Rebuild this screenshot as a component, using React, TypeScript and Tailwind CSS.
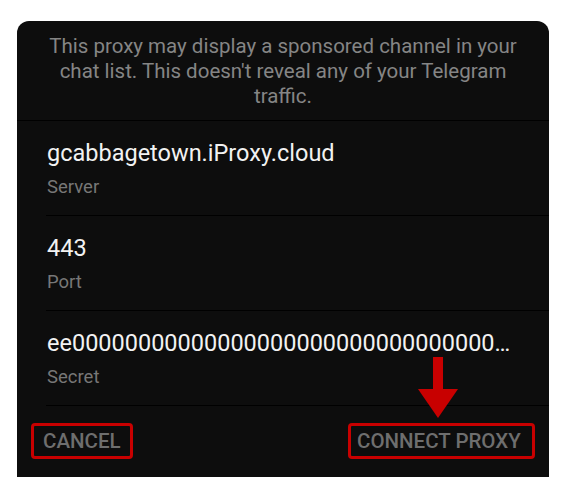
export default function App() {
  const rows = [
    { value: "gcabbagetown.iProxy.cloud", label: "Server" },
    { value: "443", label: "Port" },
    {
      value: "ee" + "00000000000000000000000000000000" + "\u2026",
      label: "Secret",
    },
  ];
  return (
    <div className="relative w-[566px] h-[493px] bg-white pt-[21px] px-[17px] font-['Roboto',sans-serif]">
      <div className="h-[456px] bg-[#0d0d0d] rounded-t-[12px] flex flex-col">
        <div className="pt-[13px] pb-[11px] px-[25px] text-center text-[20.5px] leading-[25px] text-[#858585]">
          This proxy may display a sponsored channel in your chat list. This doesn't reveal any of your Telegram traffic.
        </div>
        <div className="h-px bg-black" />
        {rows.map((r) => (
          <div key={r.label} className="ml-[29px] h-[95px] flex flex-col">
            <div className="h-[94px] pt-[17px] pl-[1px] pr-[10px]">
              <div className="text-[23.5px] leading-[30px] text-[#f2f2f2] whitespace-nowrap">{r.value}</div>
              <div className="mt-[7px] text-[18.5px] leading-[24px] text-[#777777]">{r.label}</div>
            </div>
            <div className="h-px bg-black" />
          </div>
        ))}
        <div className="flex justify-between px-[14px] pt-[17px]">
          <div className="w-[102px] h-[36px] border-[3px] border-[#c80000] rounded-[4px] flex items-center pl-[9px] text-[20.5px] font-medium text-[#6e6e6e]">
            CANCEL
          </div>
          <div className="w-[187px] h-[36px] border-[3px] border-[#c80000] rounded-[4px] flex items-center pl-[6px] text-[20.5px] font-medium text-[#6e6e6e]">
            CONNECT PROXY
          </div>
        </div>
      </div>
      <svg
        className="absolute left-[418px] top-[357px]"
        width="40"
        height="61"
        viewBox="0 0 40 61"
      >
        <rect x="15" y="0" width="10" height="33" fill="#c80000" />
        <polygon points="0,32 40,32 20,61" fill="#c80000" />
      </svg>
    </div>
  );
}
